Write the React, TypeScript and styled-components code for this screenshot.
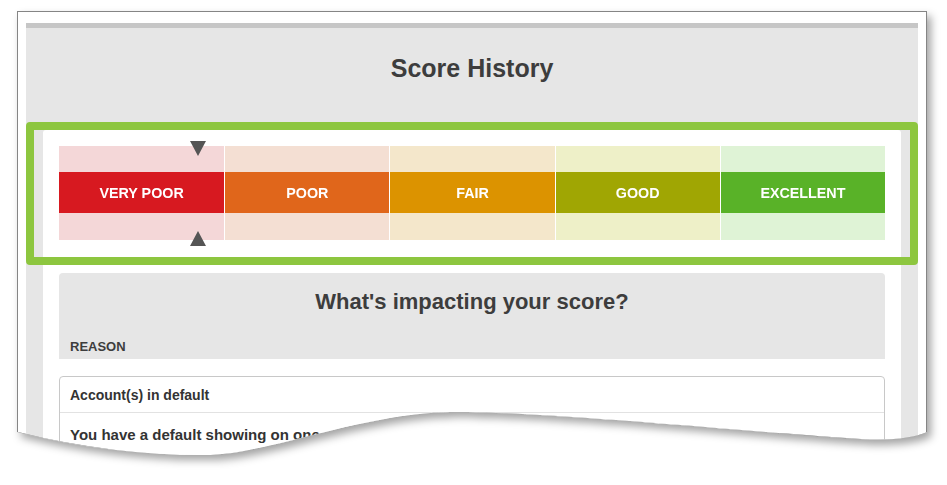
import React from 'react'
import styled, { createGlobalStyle } from 'styled-components'

const GlobalStyle = createGlobalStyle`
  * { box-sizing: border-box; }
  html, body { margin: 0; padding: 0; background: #fff; }
  body {
    font-family: "Liberation Sans", Arial, sans-serif;
    color: #3d3d3d;
  }
`

const WAVE = 'M0 421 C63 437 133 445 193 444 C253 442 343 403 433 401 C543 401 743 422 843 428 C878 430 898 426 910 421'
const CLIP = 'M0 0 H910 V421 C898 426 878 430 843 428 C743 422 543 401 433 401 C343 403 253 442 193 444 C133 445 63 437 0 421 Z'

const StyledPage = styled.div`
  width: 947px;
  height: 485px;
  overflow: hidden;
  padding: 11px 0 0 17px;
`

const StyledSheet = styled.div`
  width: 910px;
  filter: drop-shadow(4px 5px 4px rgba(0, 0, 0, 0.36));
`

const StyledPaper = styled.div`
  position: relative;
  height: 450px;
  background: #fff;
  border: 1px solid #858585;
  border-bottom: none;
  padding: 11px 8px 0 8px;
  overflow: hidden;
  clip-path: path('${CLIP}');
`

const StyledEdge = styled.svg`
  position: absolute;
  left: -1px;
  top: -1px;
  pointer-events: none;
`

const StyledPanel = styled.div`
  height: 100%;
  background: #e6e6e6;
  border-top: 5px solid #c6c6c6;
`

const StyledTitle = styled.h1`
  margin: 0;
  padding: 25px 0 39px;
  text-align: center;
  font-size: 25px;
  line-height: 30px;
  font-weight: bold;
  color: #3d3d3d;
`

const StyledHighlight = styled.div`
  border: 8px solid #8dc63f;
  border-radius: 4px;
  padding: 0 9px;
  background: #e6e6e6;
`

const StyledScaleCard = styled.div`
  background: #fff;
  padding: 16px 16px 17px;
  border-radius: 3px 3px 0 0;
`

const StyledScale = styled.div`
  position: relative;
  display: grid;
  grid-template-columns: repeat(5, 1fr);
  height: 94px;
`

const StyledBand = styled.div<{ $first?: boolean }>`
  display: grid;
  grid-template-rows: 26px 41px 27px;
  border-left: ${p => (p.$first ? 'none' : '1px solid #fff')};
`

const StyledBandTint = styled.div<{ $color: string }>`
  background: ${p => p.$color};
`

const StyledBandLabel = styled.div<{ $color: string }>`
  display: flex;
  align-items: center;
  justify-content: center;
  background: ${p => p.$color};
  color: #fff;
  font-size: 14.3px;
  font-weight: bold;
`

const StyledMarker = styled.div<{ $up?: boolean }>`
  position: absolute;
  top: ${p => (p.$up ? '85px' : '-5px')};
  width: 0;
  height: 0;
  margin-left: -8px;
  border-left: 8px solid transparent;
  border-right: 8px solid transparent;
  ${p => (p.$up ? 'border-bottom: 15px solid #555;' : 'border-top: 15px solid #555;')}
`

const StyledBody = styled.div`
  padding: 0 17px;
  height: 100%;
`

const StyledCard = styled.div`
  background: #fff;
  padding: 8px 16px 0;
  height: 100%;
`

const StyledImpact = styled.div`
  background: #e6e6e6;
  border-radius: 4px 4px 0 0;
  padding: 15px 11px 4px;
`

const StyledImpactTitle = styled.h2`
  margin: 0;
  text-align: center;
  font-size: 22px;
  line-height: 28px;
  font-weight: bold;
  color: #3d3d3d;
`

const StyledReason = styled.div`
  margin-top: 23px;
  font-size: 13px;
  line-height: 16px;
  font-weight: bold;
  color: #3d3d3d;
`

const StyledTable = styled.div`
  margin-top: 17px;
  border: 1px solid #c8c8c8;
  border-radius: 4px;
  height: 200px;
`

const StyledRowHead = styled.div`
  display: flex;
  align-items: center;
  height: 36px;
  padding: 0 10px;
  border-bottom: 1px solid #e2e2e2;
  font-size: 14px;
  font-weight: bold;
  color: #333;
`

const StyledRowText = styled.div`
  padding: 12px 10px;
  font-size: 15px;
  line-height: 20px;
  font-weight: bold;
  color: #333;
`

const bands = [
  { label: 'VERY POOR', tint: '#f4d7d8', strong: '#d71920' },
  { label: 'POOR', tint: '#f4dfd3', strong: '#e0661b' },
  { label: 'FAIR', tint: '#f4e7cb', strong: '#dc9300' },
  { label: 'GOOD', tint: '#eef0c8', strong: '#a0a603' },
  { label: 'EXCELLENT', tint: '#dff3d6', strong: '#59b228' },
]

// marker position along the scale, in percent
const score = 16.8

const App = () => {
  return (
    <StyledPage>
      <GlobalStyle />
      <StyledSheet>
        <StyledPaper>
          <StyledPanel>
            <StyledTitle>Score History</StyledTitle>
            <StyledHighlight>
              <StyledScaleCard>
                <StyledScale>
                  {bands.map((b, i) => (
                    <StyledBand key={b.label} $first={i === 0}>
                      <StyledBandTint $color={b.tint} />
                      <StyledBandLabel $color={b.strong}>{b.label}</StyledBandLabel>
                      <StyledBandTint $color={b.tint} />
                    </StyledBand>
                  ))}
                  <StyledMarker style={{ left: `${score}%` }} />
                  <StyledMarker $up style={{ left: `${score}%` }} />
                </StyledScale>
              </StyledScaleCard>
            </StyledHighlight>
            <StyledBody>
              <StyledCard>
                <StyledImpact>
                  <StyledImpactTitle>What's impacting your score?</StyledImpactTitle>
                  <StyledReason>REASON</StyledReason>
                </StyledImpact>
                <StyledTable>
                  <StyledRowHead>Account(s) in default</StyledRowHead>
                  <StyledRowText>You have a default showing on one or more of your accounts.</StyledRowText>
                </StyledTable>
              </StyledCard>
            </StyledBody>
          </StyledPanel>
          <StyledEdge width="912" height="452" viewBox="-1 -1 912 452">
            <path d={WAVE} fill="none" stroke="#7a7a7a" strokeWidth="2" />
          </StyledEdge>
        </StyledPaper>
      </StyledSheet>
    </StyledPage>
  )
}

export default App
